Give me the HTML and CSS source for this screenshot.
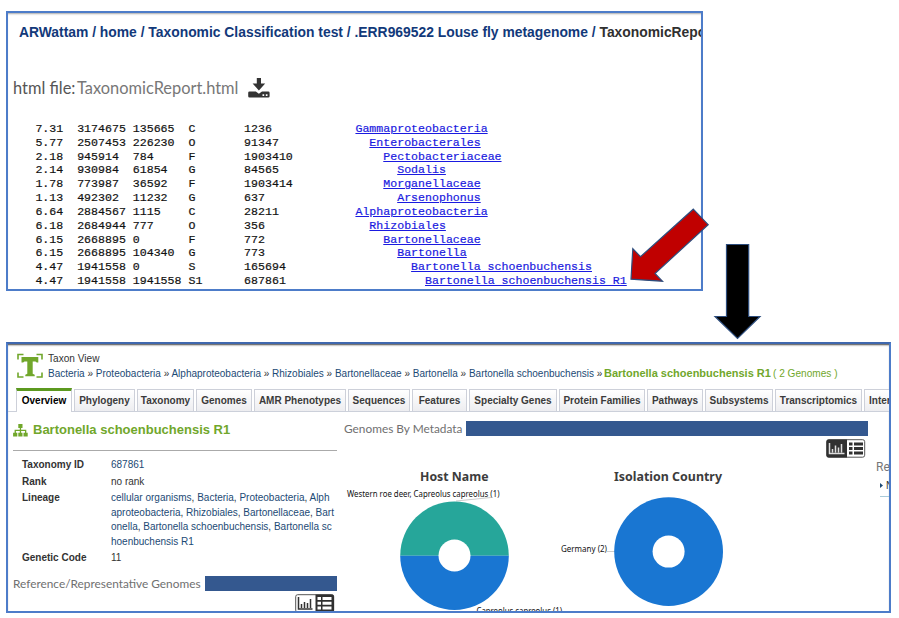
FILE: index.html
```html
<!DOCTYPE html>
<html lang="en">
<head>
<meta charset="utf-8">
<title>Taxonomic Report</title>
<link rel="stylesheet" href="styles.css">
</head>
<body>
<section class="panel report">
  <div class="crumbs"><span class="path">ARWattam / home / Taxonomic Classification test / .ERR969522 Louse fly metagenome /</span> <span class="here">TaxonomicReport.html</span></div>
  <div class="file">
    <span class="file-kind">html file:</span><span class="file-name">TaxonomicReport.html</span>
    <svg class="download" viewBox="0 0 22 20" width="22" height="20"><path d="M8.800 0h4.200v5.500h4.200L10.900 12.400 4.600 5.500h4.200z"/><path fill-rule="evenodd" d="M1.500 13.500h6.300l3.100 2.200 3.100-2.200h6.300q1.300 0 1.300 1.300v3.500q0 1.300-1.300 1.300H1.500Q.2 19.600.2 18.300v-3.500q0-1.300 1.300-1.300zM14.500 16.300v1.700h1.700v-1.700zM17.800 16.300v1.700h1.700v-1.700z"/></svg>
  </div>
<pre class="rows">7.31  3174675 135665  C       1236            <a>Gammaproteobacteria</a>
5.77  2507453 226230  O       91347             <a>Enterobacterales</a>
2.18  945914  784     F       1903410             <a>Pectobacteriaceae</a>
2.14  930984  61854   G       84565                 <a>Sodalis</a>
1.78  773987  36592   F       1903414             <a>Morganellaceae</a>
1.13  492302  11232   G       637                   <a>Arsenophonus</a>
6.64  2884567 1115    C       28211           <a>Alphaproteobacteria</a>
6.18  2684944 777     O       356               <a>Rhizobiales</a>
6.15  2668895 0       F       772                 <a>Bartonellaceae</a>
6.15  2668895 104340  G       773                   <a>Bartonella</a>
4.47  1941558 0       S       165694                  <a>Bartonella schoenbuchensis</a>
4.47  1941558 1941558 S1      687861                    <a>Bartonella schoenbuchensis R1</a></pre>
</section>

<section class="panel taxon">
  <header class="taxon-head">
    <svg class="logo" viewBox="0 0 26 26" width="26" height="26"><path class="corner" d="M1 6.500V1.500h5.500M19.500 1.500H25v5M25 19.500V24h-5.500M6.500 24H1v-4.500"/><path d="M4.500 4h16.800v5.500h-1.500L18.400 8.500h-2.700v12.300l2 1V23.300H8.300v-1.500l2-1V8.500H7.500L6.100 9.500H4.500z"/></svg>
    <div>
      <div class="view">Taxon View</div>
      <nav class="lineage"><span class="trail"><a>Bacteria</a> » <a>Proteobacteria</a> » <a>Alphaproteobacteria</a> » <a>Rhizobiales</a> » <a>Bartonellaceae</a> » <a>Bartonella</a> » <a>Bartonella schoenbuchensis</a> »</span><b>Bartonella schoenbuchensis R1</b><span class="count">( 2 Genomes )</span></nav>
    </div>
  </header>
  <div class="tabs">
    <span class="tab active">Overview</span><span class="tab">Phylogeny</span><span class="tab">Taxonomy</span><span class="tab">Genomes</span><span class="tab">AMR Phenotypes</span><span class="tab">Sequences</span><span class="tab">Features</span><span class="tab">Specialty Genes</span><span class="tab">Protein Families</span><span class="tab">Pathways</span><span class="tab">Subsystems</span><span class="tab">Transcriptomics</span><span class="tab last">Interactions</span>
  </div>
  <div class="content">
    <div class="summary">
      <h2><svg viewBox="0 0 15 13" width="15" height="13"><path d="M5.300 0h4.200v4H8.100v1.700h5.200v3h1.400v3.900h-4.200V8.700h1.500V7H8.100v1.700h1.400v3.900H5.300V8.700h1.500V7H2.900v1.700h1.400v3.900H.1V8.700h1.500v-3h5.200V4H5.300z"/></svg><span>Bartonella schoenbuchensis R1</span></h2>
      <dl>
        <dt>Taxonomy ID</dt><dd><a>687861</a></dd>
        <dt>Rank</dt><dd>no rank</dd>
        <dt>Lineage</dt><dd><a>cellular organisms</a>, <a>Bacteria</a>, <a>Proteobacteria</a>, <a>Alph<br>aproteobacteria</a>, <a>Rhizobiales</a>, <a>Bartonellaceae</a>, <a>Bart<br>onella</a>, <a>Bartonella schoenbuchensis</a>, <a>Bartonella sc<br>hoenbuchensis R1</a></dd>
        <dt>Genetic Code</dt><dd>11</dd>
      </dl>
      <div class="bar-title ref"><span>Reference/Representative Genomes</span><i></i></div>
      <svg class="toggle" viewBox="0 0 40 19" width="40" height="19"><rect class="light" x=".7" y=".7" width="38" height="17.500" rx="2"/><path class="dark" d="M20.500.5H37q2 0 2 2v16H20.500z"/><path class="ink" d="M3.500 3v12h14M6.500 14v-4M9.500 14V8M12.500 14v-5M15.500 14V5"/><path class="paper" d="M22.500 3h3.500v3h-3.500zM27.500 3h9v3h-9zM22.500 7.700h3.500v3h-3.500zM27.500 7.700h9v3h-9zM22.500 12.400h3.500v3h-3.500zM27.500 12.400h9v3h-9z"/></svg>
    </div>
    <div class="metadata">
      <div class="bar-title gen"><span>Genomes By Metadata</span><i></i></div>
      <svg class="toggle" viewBox="0 0 40 19" width="40" height="19"><rect class="light" x=".7" y=".7" width="38" height="17.500" rx="2"/><path class="dark" d="M2.500.5H21v18H2.500q-2 0-2-2v-14q0-2 2-2z"/><path class="chalk" d="M3.500 4v10.500h15M6.500 13.500v-3.500M9.500 13.500V6.500M12.500 13.500v-5M15.500 13.500V5"/><path class="block" d="M23 3.500h3.500v3H23zM28 3.500h9v3h-9zM23 8h3.500v3H23zM28 8h9v3h-9zM23 12.500h3.500v3H23zM28 12.500h9v3h-9z"/></svg>
      <svg class="charts" viewBox="340 465 530 146" width="530" height="146">
        <text class="ct" x="420" y="481" textLength="68.500" lengthAdjust="spacingAndGlyphs">Host Name</text>
        <path class="lead" d="M456 501l35-3.500M607 551.500h8"/>
        <text class="cl" x="347" y="496.500" textLength="152.500" lengthAdjust="spacingAndGlyphs">Western roe deer, Capreolus capreolus (1)</text>
        <path fill="#26a69a" d="M400.200 555.700a54.300 54.300 0 0 1 108.600 0z"/>
        <path fill="#1976d2" d="M400.200 555.700a54.300 54.300 0 0 0 108.600 0z"/>
        <circle cx="454.500" cy="555.500" r="16" fill="#fff"/>
        <text class="cl" x="476.500" y="614" textLength="85.500" lengthAdjust="spacingAndGlyphs">Capreolus capreolus (1)</text>
        <text class="ct" x="614" y="481" textLength="108" lengthAdjust="spacingAndGlyphs">Isolation Country</text>
        <text class="cl" x="561" y="552" textLength="46" lengthAdjust="spacingAndGlyphs">Germany (2)</text>
        <circle cx="668.600" cy="551.600" r="54.400" fill="#1976d2"/>
        <circle cx="668.600" cy="551.600" r="16" fill="#fff"/>
      </svg>
    </div>
    <aside>
      <div class="recent">Recent</div>
      <div class="item"><svg viewBox="0 0 3 5" width="3" height="5"><path d="M0 0l3 2.500L0 5z"/></svg><span>New</span></div>
    </aside>
  </div>
</section>

<svg class="arrows" viewBox="0 0 899 618" width="899" height="618">
  <path fill="#c00000" d="M693.300 209.200L708.200 224.700 655 273.500l7.500 7.700-31.500-2 1.800-30.500 7.700 8z"/>
  <path fill="#000" d="M726.500 244.500h22.200v72h11.300l-22.500 22-22.500-22h11.500z"/>
</svg>
</body>
</html>
```
FILE: styles.css
```css
* { box-sizing: border-box; }
body { margin: 0; padding: 11px 0 0 6px; width: 899px; height: 618px; overflow: hidden; background: #fff; font-family: "Liberation Sans", Arial, sans-serif; color: #333; }
.panel { border: 2px solid #4d7cc9; overflow: hidden; white-space: nowrap; }
.report { width: 697px; height: 280px; box-shadow: inset 0 2px 2px -1px #aaa; }
.crumbs { margin: 10px 0 0 11px; height: 19px; font-size: 13.870px; line-height: 18px; font-weight: bold; color: #303030; }
.path { color: #12397a; }
.file { display: flex; height: 22px; margin: 35px 0 0 5px; font: 16.400px/22px Lato, sans-serif; color: #777; }
.file-kind { width: 64px; color: #555; }
.file-name { width: 171px; }
.download { margin-top: 1px; fill: #333; }
.rows { margin: 23px 0 0 27.400px; font: 11.600px/13.830px "Liberation Mono", monospace; color: #111; -webkit-text-stroke: .2px; }
.rows a { color: #1a1ae0; text-decoration: underline; }

.taxon { width: 885px; height: 271px; margin-top: 51px; border-top-color: #3f68ae; box-shadow: inset 0 2px 2px -1px #444; }
.taxon-head { display: flex; height: 44px; padding: 9px 0 0 9px; font-size: 10px; }
.logo { fill: #71a72b; margin-right: 5px; }
.corner { fill: none; stroke: #71a72b; stroke-width: 1.600; }
.view { height: 12px; line-height: 11px; margin-bottom: 1px; font-size: 10.100px; }
.lineage { display: flex; height: 15px; line-height: 15px; }
.lineage a, dd a { color: #1c4a75; }
.trail { width: 556px; }
.lineage b { width: 169px; font-size: 11px; color: #71a72b; }
.count { color: #71a72b; font-size: 10.100px; }
.tabs { display: grid; grid-template-columns: 58px 63px 59px 58px 94px 64px 57px 90px 88px 58px 70px 89px 60px; height: 24px; padding-left: 8px; align-items: end; border-bottom: 1px solid #ccd0da; }
.tab { height: 22px; margin-right: 2px; border: 1px solid #cdd0d9; border-bottom: 0; background: linear-gradient(#fff, #ededf0); font-size: 10px; line-height: 22px; font-weight: bold; text-align: center; color: #3b3b3b; }
.tab.active { height: 24px; margin-bottom: -1px; border-top: 3px solid #5c991f; background: #fff; color: #000; line-height: 20px; }
.tab.last { text-align: left; padding-left: 4px; }
.content { display: grid; grid-template-columns: 332px 528px 60px; }
.summary { padding: 9px 3px 0 5px; }
h2 { display: flex; gap: 5px; height: 30px; margin: 0; border-bottom: 1px solid #aaa; font-size: 13px; line-height: 17px; color: #71a72b; }
h2 svg { fill: #71a72b; margin-top: 3px; }
dl { display: grid; grid-template-columns: 89px 1fr; row-gap: 2px; height: 118px; margin: 0; padding: 7px 0 0 9px; font-size: 10px; line-height: 14.500px; align-content: start; }
dt { font-weight: bold; color: #333; }
dd { margin: 0; }
.bar-title { display: flex; align-items: center; height: 15px; font: 11.850px/15px Lato, sans-serif; color: #707070; }
.bar-title i { flex: 1; height: 15px; background: #34588f; }
.ref { margin-top: 7px; }
.ref span { width: 191.500px; }
.toggle { display: block; margin: 3px 0 0 auto; }
.summary .toggle { margin-right: 2px; }
.metadata .toggle { margin-right: 2px; }
.light { fill: #fff; stroke: #555; }
.dark, .block { fill: #303030; }
.ink, .chalk { fill: none; stroke: #333; stroke-width: 1.500; }
.chalk { stroke: #ddd; }
.paper { fill: #fff; }
.metadata { padding: 9px 0 0 4px; }
.gen span { width: 122px; }
.charts { display: block; margin: 7px 0 0 -4px; }
.ct { font: bold 12px "Noto Sans", sans-serif; fill: #3c3c3c; }
.cl { font: 8.500px "Noto Sans", sans-serif; fill: #111; }
.lead { fill: none; stroke: #ccc; }
aside { padding: 48px 0 0 8px; }
.recent { font: 12px/15px Roboto, sans-serif; color: #777; }
.item { display: flex; align-items: center; gap: 3px; height: 22px; margin-left: 4px; border-bottom: 1px solid #a9cbd9; font-size: 10px; }
.item svg { fill: #1c4a75; }
.arrows { position: absolute; left: 0; top: 0; stroke: #2d4d7d; stroke-width: 1.200; pointer-events: none; }
```
